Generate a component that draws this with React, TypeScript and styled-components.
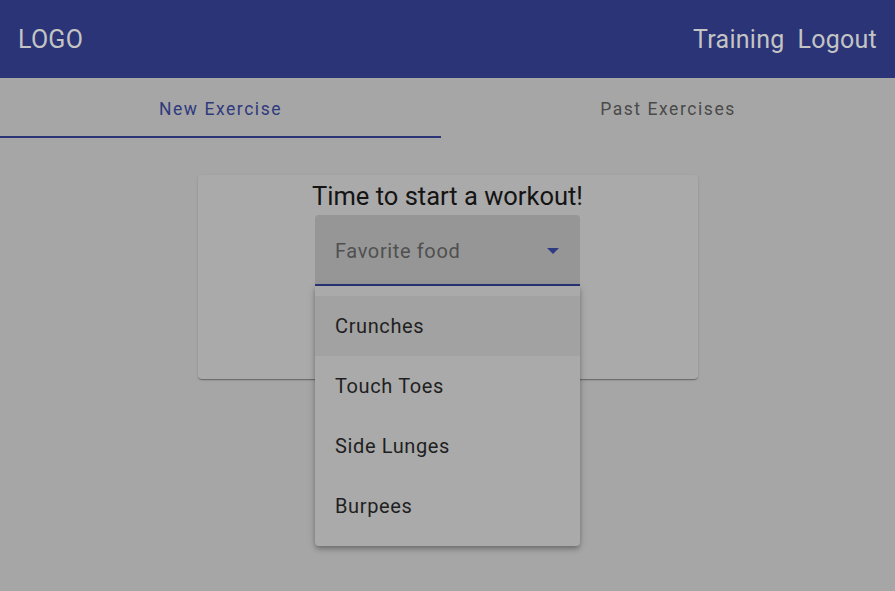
import * as React from 'react'
import styled, { createGlobalStyle } from 'styled-components'

const GlobalStyle = createGlobalStyle`
    html, body {
        margin: 0;
        padding: 0;
        background: #a6a6a6;
        font-family: Roboto, "Noto Sans", sans-serif;
    }
`

const exercises = ['Crunches', 'Touch Toes', 'Side Lunges', 'Burpees']

export default function App() {
    return (
        <Page>
            <GlobalStyle />
            <Toolbar>
                <Logo>LOGO</Logo>
                <Nav>
                    <NavLink>Training</NavLink>
                    <NavLink>Logout</NavLink>
                </Nav>
            </Toolbar>
            <Tabs>
                <Tab active>New Exercise</Tab>
                <Tab>Past Exercises</Tab>
            </Tabs>
            <Content>
                <Card>
                    <Title>Time to start a workout!</Title>
                    <SelectWrap>
                        <Field>
                            <Placeholder>Favorite food</Placeholder>
                            <Arrow />
                        </Field>
                        <Panel>
                            {exercises.map((name, index) =>
                                <Option key={name} active={index === 0}>{name}</Option>
                            )}
                        </Panel>
                    </SelectWrap>
                </Card>
            </Content>
        </Page>
    )
}

const Page = styled.div`
    min-height: 591px;
    background: #a6a6a6;
`

const Toolbar = styled.header`
    height: 78px;
    background: #2a3477;
    display: flex;
    align-items: center;
    justify-content: space-between;
    padding: 0 18px;
    color: #c4c4c4;
    font-size: 25px;
    letter-spacing: 0.25px;
`

const Logo = styled.div``

const Nav = styled.nav`
    display: flex;
    gap: 13px;
`

const NavLink = styled.span`
    cursor: pointer;
`

const Tabs = styled.div`
    display: flex;
    height: 60px;
`

const Tab = styled.div<{ active?: boolean }>`
    flex: ${p => p.active ? '0 0 441px' : '1'};
    display: flex;
    align-items: center;
    justify-content: center;
    padding-top: 3px;
    font-size: 17.5px;
    letter-spacing: 1.56px;
    color: ${p => p.active ? '#2f3a7c' : '#4a4a4a'};
    box-sizing: border-box;
    border-bottom: 2px solid ${p => p.active ? '#2a3477' : 'transparent'};
`

const Content = styled.main`
    display: flex;
    justify-content: center;
    padding-top: 37px;
`

const Card = styled.section`
    width: 500px;
    height: 204px;
    box-sizing: border-box;
    background: #aaaaaa;
    border-radius: 4px;
    box-shadow: 0 2px 1px -1px rgba(0, 0, 0, 0.2), 0 1px 1px 0 rgba(0, 0, 0, 0.14), 0 1px 3px 0 rgba(0, 0, 0, 0.12);
    display: flex;
    flex-direction: column;
    align-items: center;
    padding-top: 5px;
`

const Title = styled.h1`
    margin: 0;
    font-size: 25.5px;
    font-weight: 400;
    line-height: 32px;
    color: #141414;
`

const SelectWrap = styled.div`
    position: relative;
    width: 265px;
    margin-top: 3px;
`

const Field = styled.div`
    height: 71px;
    box-sizing: border-box;
    background: #969696;
    border-radius: 4px 4px 0 0;
    border-bottom: 2px solid #2a3477;
    display: flex;
    align-items: center;
    justify-content: space-between;
    padding: 3px 21px 0 20px;
`

const Placeholder = styled.span`
    font-size: 20px;
    letter-spacing: 0.625px;
    color: #505050;
`

const Arrow = styled.span`
    width: 0;
    height: 0;
    border-left: 6px solid transparent;
    border-right: 6px solid transparent;
    border-top: 6px solid #2e3a82;
`

const Panel = styled.div`
    position: absolute;
    top: 71px;
    left: 0;
    right: 0;
    padding: 10px 0;
    background: #aaaaaa;
    border-radius: 0 0 4px 4px;
    box-shadow: 0 2px 4px -1px rgba(0, 0, 0, 0.2), 0 4px 5px 0 rgba(0, 0, 0, 0.14), 0 1px 10px 0 rgba(0, 0, 0, 0.12);
    z-index: 10;
`

const Option = styled.div<{ active?: boolean }>`
    height: 60px;
    display: flex;
    align-items: center;
    padding: 0 20px;
    font-size: 20px;
    letter-spacing: 0.625px;
    color: #1f1f1f;
    background: ${p => p.active ? '#a2a2a2' : 'transparent'};
`
